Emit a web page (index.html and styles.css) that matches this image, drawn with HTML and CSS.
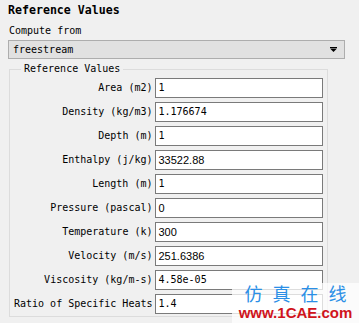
FILE: index.html
```html
<!DOCTYPE html>
<html>
<head>
  <title>Reference Values</title>
  <link rel="stylesheet" href="styles.css">
</head>
<body>
  <div class="panel">
    <h1 class="title">Reference Values</h1>

    <div class="field-label">Compute from</div>
    <div class="dropdown">
      <span>freestream</span>
      <svg class="arrow" width="7" height="5" viewBox="0 0 7 5">
        <rect x="0" y="0" width="7" height="1" fill="#000"/>
        <polygon points="0,1.5 7,1.5 3.5,5" fill="#000"/>
      </svg>
    </div>

    <fieldset class="values">
      <legend>Reference Values</legend>
      <div class="grid">
        <label>Area (m2)</label><div class="box">1</div>
        <label>Density (kg/m3)</label><div class="box">1.176674</div>
        <label>Depth (m)</label><div class="box">1</div>
        <label>Enthalpy (j/kg)</label><div class="box sans">33522.88</div>
        <label>Length (m)</label><div class="box">1</div>
        <label>Pressure (pascal)</label><div class="box sans">0</div>
        <label>Temperature (k)</label><div class="box sans">300</div>
        <label>Velocity (m/s)</label><div class="box sans">251.6386</div>
        <label>Viscosity (kg/m-s)</label><div class="box">4.58e-05</div>
        <label>Ratio of Specific Heats</label><div class="box">1.4</div>
      </div>
    </fieldset>
  </div>

  <div class="logo">
    <div class="logo-cn">仿真在线</div>
    <div class="logo-url">www.1CAE.com</div>
  </div>
</body>
</html>
```

FILE: styles.css
```css
body {
  margin: 0;
  background-color: #f0f0f0;
  font-family: "DejaVu Sans Mono", "Liberation Mono", monospace;
  font-size: 10px;
  color: #000;
  width: 359px;
  height: 323px;
  overflow: hidden;
  position: relative;
}

.panel {
  padding: 3px 14px 0 8px;
}

.title {
  margin: 0;
  font-size: 11.6px;
  font-weight: bold;
  line-height: 14px;
}

.field-label {
  margin-top: 8px;
  line-height: 12px;
  padding-left: 1px;
}

.dropdown {
  margin-top: 3px;
  height: 17px;
  border: 1px solid #adadad;
  background-color: #e1e1e1;
  display: flex;
  align-items: center;
  justify-content: space-between;
  padding: 0 7px 0 4px;
}

.values {
  margin: 4px 23px 0 1px;
  padding: 3px 4px 2px 4px;
  border: 1px solid #dcdcdc;
}

.values legend {
  padding: 0 3px;
  margin-left: 7px;
  line-height: 12px;
}

.grid {
  display: grid;
  grid-template-columns: 1fr 168px;
  grid-auto-rows: 20px;
  column-gap: 3px;
  row-gap: 4px;
}

.grid label {
  text-align: right;
  line-height: 20px;
  white-space: nowrap;
}

.box {
  border: 1px solid #7a7a7a;
  background-color: #fff;
  line-height: 18px;
  padding-left: 2px;
}

.box.sans {
  font-family: "Liberation Sans", Arial, sans-serif;
  font-size: 11px;
}

.logo {
  position: absolute;
  left: 232px;
  top: 283px;
  width: 127px;
  height: 40px;
  background-color: rgba(255, 255, 255, 0.75);
  text-align: center;
}

.logo-cn {
  font-family: "Noto Sans CJK SC", sans-serif;
  font-size: 18px;
  line-height: 21px;
  color: #2b8fe6;
  letter-spacing: 10px;
  padding-left: 10px;
}

.logo-url {
  font-family: "Liberation Sans", Arial, sans-serif;
  font-weight: bold;
  font-size: 15px;
  line-height: 17px;
  color: #d0141c;
}
```
